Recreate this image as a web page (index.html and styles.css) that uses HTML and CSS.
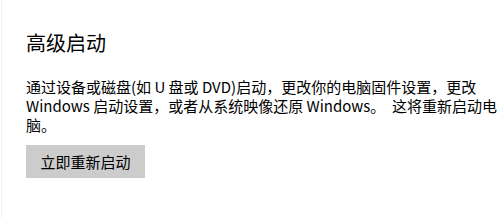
FILE: index.html
```html
<!DOCTYPE html>
<html lang="zh-CN">
<head>
<meta charset="utf-8">
<title>高级启动</title>
<link rel="stylesheet" href="styles.css">
</head>
<body>
<div class="page">
  <section class="panel">
    <h2 class="title">高级启动</h2>
    <p class="desc">通过设备或磁盘(如 U 盘或 DVD)启动，更改你的电脑固件设置，更改 Windows 启动设置，或者从系统映像还原 Windows。 &nbsp;这将重新启动电脑。</p>
    <button class="btn" type="button">立即重新启动</button>
  </section>
</div>
</body>
</html>
```
FILE: styles.css
```css
html, body {
  margin: 0;
  padding: 0;
  background: #ffffff;
}
body {
  font-family: "Noto Sans CJK SC", sans-serif;
  color: #000000;
}
.page {
  width: 499px;
  height: 218px;
  box-sizing: border-box;
  margin-left: 1px;
  border-left: 1px solid #f3f3f3;
}
.panel {
  padding: 29px 0 0 24px;
  width: 472px;
}
.title {
  margin: 0;
  font-size: 20px;
  font-weight: 400;
  line-height: 28px;
  color: #000;
}
.desc {
  margin: 20px 0 0 0;
  font-size: 15px;
  line-height: 19px;
  color: #000;
}
.btn {
  display: block;
  margin-top: 11px;
  width: 119px;
  height: 33px;
  padding: 0;
  border: none;
  background: #cccccc;
  font-family: "Noto Sans CJK SC", sans-serif;
  font-size: 15px;
  color: #000;
}
```
